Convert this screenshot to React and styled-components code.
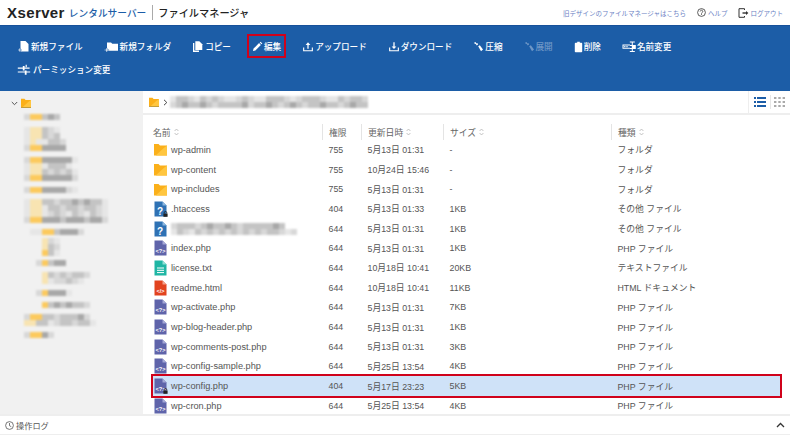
import styled, { createGlobalStyle } from "styled-components";

const GlobalStyle = createGlobalStyle`
  html, body {
    margin: 0;
    padding: 0;
    background: #fff;
    font-family: "Liberation Sans", "Noto Sans CJK JP", sans-serif;
    color: #555;
  }
`;

const Page = styled.div`
  width: 790px;
  height: 437px;
  display: flex;
  flex-direction: column;
  overflow: hidden;
`;

const Header = styled.header`
  height: 25px;
  display: flex;
  align-items: center;
  padding: 0 7px;
  flex: none;
`;

const Logo = styled.span`
  font-size: 15px;
  font-weight: 700;
  color: #222;
  letter-spacing: 0.4px;
`;

const Service = styled.span`
  margin-left: 4px;
  font-size: 9.7px;
  font-weight: 500;
  color: #1c5da7;
`;

const AppName = styled.span`
  margin-left: 6px;
  padding-left: 5px;
  border-left: 1px solid #aaa;
  font-size: 10.2px;
  font-weight: 500;
  color: #222;
`;

const HeaderLinks = styled.nav`
  margin-left: auto;
  display: flex;
  align-items: center;
  font-size: 6.5px;
`;

const HeaderLink = styled.a`
  display: flex;
  align-items: center;
  gap: 2px;
  margin-left: ${(p) => p.$gap}px;
  color: #6b7fc4;
`;

const Toolbar = styled.div`
  height: 66px;
  flex: none;
  box-sizing: border-box;
  background: #1c5da7;
  border-top: 1px solid #17519a;
  padding: 13px 60px 0 17px;
  display: flex;
  flex-wrap: wrap;
  align-content: flex-start;
  column-gap: 21px;
  row-gap: 9px;
`;

const ToolButton = styled.div`
  height: 14px;
  display: flex;
  align-items: center;
  gap: 1px;
  font-size: 8.6px;
  font-weight: 500;
  white-space: nowrap;
  color: ${(p) => (p.$disabled ? "#6f97c6" : "#fff")};
  outline: ${(p) => (p.$active ? "2.5px solid #d0021b" : "none")};
  outline-offset: 3px;
`;

const Body = styled.div`
  flex: 1;
  min-height: 0;
  display: flex;
`;

const Sidebar = styled.aside`
  width: 143px;
  flex: none;
  background: #f1f1f1;
  padding-top: 7px;
  box-sizing: border-box;
`;

const TreeRoot = styled.div`
  display: flex;
  align-items: center;
  gap: 3px;
  padding-left: 11px;
  height: 10px;
  margin-bottom: 6px;
`;

const Mosaic = styled.div`
  display: flex;
  flex-direction: column;
  filter: blur(0.9px);
  padding-left: ${(p) => p.$left || 0}px;
`;

const MosaicRow = styled.div`
  display: flex;
  height: 6px;
  margin-top: ${(p) => p.$top || 0}px;
`;

const tones = {
  ".": "transparent",
  a: "#e6e6e6",
  l: "#d8d8d8",
  m: "#c4c4c4",
  d: "#a8a8a8",
  y: "#fcca5e",
  p: "#f8e4b2",
};

const MosaicCell = styled.i`
  width: 6px;
  height: 6px;
  flex: none;
  background: ${(p) => tones[p.$tone]};
`;

const Main = styled.main`
  flex: 1;
  min-width: 0;
  display: flex;
  flex-direction: column;
`;

const PathBar = styled.div`
  height: 24px;
  flex: none;
  box-sizing: border-box;
  border-bottom: 2px solid #eee;
  display: flex;
  align-items: center;
  padding-left: 6px;
`;

const PathArrow = styled.span`
  margin: 0 2px 0 4px;
  display: flex;
`;

const ViewSwitch = styled.div`
  margin-left: auto;
  width: 42px;
  height: 100%;
  box-sizing: border-box;
  border-left: 1px solid #eee;
  display: flex;
  align-items: center;
  justify-content: space-between;
  padding: 0 5px;
`;

const ViewDivider = styled.span`
  width: 1px;
  height: 14px;
  background: #e6e6e6;
`;

const Listing = styled.div`
  flex: 1;
  min-height: 0;
  overflow: hidden;
  padding: 9px 10px 0;
`;

const Grid = styled.div`
  display: grid;
  grid-template-columns: 169px 39px 82px 168px 1fr;
  align-items: center;
`;

const HeadRow = styled(Grid)`
  height: 16px;
  font-size: 8.8px;
  color: #666;
`;

const HeadCell = styled.div`
  display: flex;
  align-items: center;
  gap: 3px;
  height: 100%;
  padding-left: ${(p) => (p.$first ? 0 : 6)}px;
  border-left: ${(p) => (p.$first ? "none" : "1px solid #e4e4e4")};
  box-sizing: border-box;
`;

const FileRow = styled(Grid)`
  height: 19.7px;
  font-size: 8.8px;
  color: #555;
  background: ${(p) => (p.$selected ? "#cfe2f8" : "transparent")};
  outline: ${(p) => (p.$selected ? "2.5px solid #d0021b" : "none")};
  position: relative;
`;

const Cell = styled.div`
  padding-left: 6.5px;
  white-space: nowrap;
`;

const NameCell = styled.div`
  display: flex;
  align-items: center;
  gap: 4px;
  font-size: 9.2px;
  padding-left: 1px;
  white-space: nowrap;
`;

const IconBox = styled.span`
  position: relative;
  display: flex;
  width: 13px;
  height: 16px;
  align-items: center;
  flex: none;
`;

const LockBadge = styled.svg`
  position: absolute;
  right: -1px;
  bottom: 0;
`;

const Footer = styled.footer`
  height: 21px;
  flex: none;
  box-sizing: border-box;
  border-top: 2px solid #eee;
  border-bottom: 1px solid #eee;
  margin-bottom: 2px;
  display: flex;
  align-items: center;
  padding: 0 5px;
  font-size: 8.2px;
  color: #555;
  gap: 2px;
`;

const FooterToggle = styled.span`
  margin-left: auto;
  display: flex;
`;

const W = ({ children, w = 13, vb = "0 0 13 13" }) => (
  <svg width={w} height="13" viewBox={vb} fill="#fff">
    {children}
  </svg>
);

const icons = {
  newFile: (
    <W>
      <path d="M3.5 1h5l3 3v7.5h-8z" />
      <path d="M1 9.5h1.2V8.3h1v1.2h1.2v1H3.2v1.2h-1v-1.2H1z" stroke="#1c5da7" strokeWidth=".4" />
    </W>
  ),
  newFolder: (
    <W w={15} vb="0 0 15 13">
      <path d="M3 2.5h4l1.3 1.3H14v7H3z" />
      <path d="M.6 9.5h1.5V8h1.1v1.5h1.5v1.1H3.2v1.5H2.1v-1.5H.6z" stroke="#1c5da7" strokeWidth=".4" />
    </W>
  ),
  copy: (
    <W w={12} vb="0 0 12 13">
      <path d="M1 3h1.3v7.5H7V12H1z" />
      <path d="M3.3 1.2h4l3 3V10h-7z" />
    </W>
  ),
  edit: (
    <W w={11} vb="0 0 12 13">
      <path d="M1 11.5l.7-2.7 6-6 2 2-6 6zM8.4 2.1l.9-.9 2 2-.9.9z" />
    </W>
  ),
  upload: (
    <W w={12}>
      <path d="M1.2 7.5h1.2v3h8.2v-3h1.2v4.2H1.2z" />
      <path d="M6.5 2l2.6 2.8H7.2V9H5.8V4.8H3.9z" />
    </W>
  ),
  download: (
    <W w={12}>
      <path d="M1.2 7.5h1.2v3h8.2v-3h1.2v4.2H1.2z" />
      <path d="M6.5 9.2L3.9 6.4h1.9V2h1.4v4.4h1.9z" />
    </W>
  ),
  compress: (
    <W w={11} vb="0 0 11 13">
      <path d="M.8 3l1.6-.9 1.2 1.5 1-.5.3 2-2 .2.5-.9z" />
      <path d="M5.2 6.2l1.6-1 3.2 4.4-2 1.6z" />
    </W>
  ),
  expand: (
    <W w={11} vb="0 0 11 13">
      <g fill="#6f97c6">
        <path d="M.8 3l1.6-.9 1.2 1.5 1-.5.3 2-2 .2.5-.9z" />
        <path d="M5.2 6.2l1.6-1 3.2 4.4-2 1.6z" />
      </g>
    </W>
  ),
  trash: (
    <W w={9} vb="0 0 9 13">
      <path d="M3.2 1.8h2.6v.9h1.6c.5 0 .8.3.8.8v8c0 .5-.3.8-.8.8H1.6c-.5 0-.8-.3-.8-.8v-8c0-.5.3-.8.8-.8h1.6z" />
    </W>
  ),
  rename: (
    <W w={14} vb="0 0 14 13">
      <path d="M.5 4.5h7.5v1H1.5v2.2H8v1H.5z" />
      <path d="M7.8 1.5h5v1h-2v2.4h3v4h-3v2.2h2v1h-5v-1h2V8.9H8V7.9h1.8v-2H8v-1h1.8V2.5h-2z" />
      <path d="M2.2 6h1.2v1.2H2.2zM4.4 6h1.2v1.2H4.4z" />
    </W>
  ),
  perm: (
    <W w={15} vb="0 0 15 13">
      <path d="M.8 4.6h5V3h1.8v1.6h5v1.2h-5v1.6H5.8V5.8h-5z" />
      <path d="M.8 8.4h7V7.4h1.8v1h3.6v1.2H9.6v2.2H7.8V9.6h-7z" />
      <path d="M8.6 1.8h1.2v2.4H8.6z" />
    </W>
  ),
};

const tools = [
  ["newFile", "新規ファイル"],
  ["newFolder", "新規フォルダ"],
  ["copy", "コピー"],
  ["edit", "編集", { $active: true }],
  ["upload", "アップロード"],
  ["download", "ダウンロード"],
  ["compress", "圧縮"],
  ["expand", "展開", { $disabled: true }],
  ["trash", "削除"],
  ["rename", "名前変更"],
  ["perm", "パーミッション変更"],
];

function Folder({ size = 12, line }) {
  return (
    <svg width={size} height={size} viewBox="0 0 12 12">
      <path d="M0 1h4.2L5.5 2.4H12V11.5H0z" fill="#fbb01a" />
      <path d="M12 2.4v9.1H1.5L8 5.5z" fill="#ffc640" />
      {line && <path d="M0 11.6h12" stroke="#8a6a10" strokeWidth=".7" />}
    </svg>
  );
}

const docColors = {
  php: ["#5f64aa", "#a5a8d6"],
  help: ["#2f72b4", "#8cb6de"],
  text: ["#1fb6a4", "#8fe0d5"],
  html: ["#e2431f", "#f2a18c"],
};

function Doc({ kind, locked }) {
  const [fill, fold] = docColors[kind];
  return (
    <IconBox>
      <svg width="13" height="16" viewBox="0 0 13 16">
        <path d="M.5.5h8L12.5 4.5v11H.5z" fill={fill} />
        <path d="M8.5.5l4 4h-4z" fill={fold} />
        {kind === "php" && (
          <text x="6.5" y="12.8" fontSize="5.6" fontWeight="700" textAnchor="middle" fill="#fff">
            {"<?>"}
          </text>
        )}
        {kind === "help" && (
          <text x="6" y="13.6" fontSize="10" fontWeight="700" textAnchor="middle" fill="#fff">
            ?
          </text>
        )}
        {kind === "html" && (
          <text x="6.5" y="12.5" fontSize="5.6" fontWeight="700" textAnchor="middle" fill="#fff">
            {"</>"}
          </text>
        )}
        {kind === "text" && <path d="M3 8h7M3 10.3h7M3 12.6h7" stroke="#fff" strokeWidth="1" />}
      </svg>
      {locked && (
        <LockBadge width="5" height="6" viewBox="0 0 5 6">
          <path d="M1.2 2.6V1.8a1.3 1.3 0 012.6 0v.8" fill="none" stroke="#222" strokeWidth=".8" />
          <path d="M.4 2.6h4.2v3.2H.4z" fill="#222" />
        </LockBadge>
      )}
    </IconBox>
  );
}

function SortMark() {
  return (
    <svg width="5" height="8" viewBox="0 0 5 8" fill="none" stroke="#aaa" strokeWidth=".7">
      <path d="M.6 3L2.5 1l1.9 2M.6 5l1.9 2 1.9-2" />
    </svg>
  );
}

const files = [
  ["folder", "wp-admin", "755", "5月13日 01:31", "-", "フォルダ"],
  ["folder", "wp-content", "755", "10月24日 15:46", "-", "フォルダ"],
  ["folder", "wp-includes", "755", "5月13日 01:31", "-", "フォルダ"],
  ["help", ".htaccess", "404", "5月13日 01:33", "1KB", "その他 ファイル", true],
  ["help", null, "644", "5月13日 01:31", "1KB", "その他 ファイル"],
  ["php", "index.php", "644", "5月13日 01:31", "1KB", "PHP ファイル"],
  ["text", "license.txt", "644", "10月18日 10:41", "20KB", "テキストファイル"],
  ["html", "readme.html", "644", "10月18日 10:41", "11KB", "HTML ドキュメント"],
  ["php", "wp-activate.php", "644", "5月13日 01:31", "7KB", "PHP ファイル"],
  ["php", "wp-blog-header.php", "644", "5月13日 01:31", "1KB", "PHP ファイル"],
  ["php", "wp-comments-post.php", "644", "5月13日 01:31", "3KB", "PHP ファイル"],
  ["php", "wp-config-sample.php", "644", "5月25日 13:54", "4KB", "PHP ファイル"],
  ["php", "wp-config.php", "404", "5月17日 23:23", "5KB", "PHP ファイル", true, true],
  ["php", "wp-cron.php", "644", "5月25日 13:54", "4KB", "PHP ファイル"],
];

// blurred-out folder tree, one letter per 6px block
const tree = [
  ["lyymdm", 0],
  ["appmla", 7],
  ["appmlm", 0],
  ["apaamml", 0],
  ["lyydddd", 0],
  ["lyyddddda", 6],
  ["appammma", 0],
  ["appmlmlma", 0],
  ["lyydddddl", 0],
  ["lyyddddla", 6],
  ["appmmlmmdmdmma", 6],
  ["appammlmmlmmla", 0],
  ["appalmlamlamla", 0],
  ["lyydddmdddmddl", 0],
  [".aayymdddl", 6],
  ["...pla", 3],
  ["...pml", 0],
  ["...yma", 0],
  ["..lymdd", 4],
  ["...pmlmlmml", 6],
  ["...pallmla", 0],
  ["..lyddda", 6],
  ["...ymdmdmml", 6],
  ["lyymmlmmmdl", 6],
  ["ppmmalmmlmma", 0],
  ["lyydl", 6],
];

const pathMosaic = [
  "ammlamlmlaalmlaammmlalmmmlaamlmml",
  "lmdmmdmlmmmmdlmmdmlmdmlmmdmmlmdmm",
];

const fileMosaic = [
  "lmmmlmdmmdmlmmmmmdm",
  "amlamlmlmlmlmlmlmmlal",
];

function Blur({ rows, left }) {
  return (
    <Mosaic $left={left}>
      {rows.map(([cells, top], i) => (
        <MosaicRow key={i} $top={top}>
          {cells.split("").map((tone, j) => (
            <MosaicCell key={j} $tone={tone} />
          ))}
        </MosaicRow>
      ))}
    </Mosaic>
  );
}

export default function App() {
  return (
    <Page>
      <GlobalStyle />
      <Header>
        <Logo>Xserver</Logo>
        <Service>レンタルサーバー</Service>
        <AppName>ファイルマネージャ</AppName>
        <HeaderLinks>
          <HeaderLink $gap={0}>旧デザインのファイルマネージャはこちら</HeaderLink>
          <HeaderLink $gap={11}>
            <svg width="9" height="9" viewBox="0 0 9 9" fill="none" stroke="#333" strokeWidth=".8">
              <circle cx="4.5" cy="4.5" r="3.9" />
              <path d="M3.2 3.5a1.3 1.3 0 112 1.1c-.5.3-.7.5-.7 1M4.5 6.2v.8" />
            </svg>
            ヘルプ
          </HeaderLink>
          <HeaderLink $gap={10}>
            <svg width="11" height="10" viewBox="0 0 11 10" fill="none" stroke="#333" strokeWidth="1">
              <path d="M6.5 2V.7H1v8.6h5.5V8" />
              <path d="M4.5 5H9" strokeWidth="1.4" />
              <path d="M8 3l2.4 2L8 7z" fill="#333" stroke="none" />
            </svg>
            ログアウト
          </HeaderLink>
        </HeaderLinks>
      </Header>

      <Toolbar>
        {tools.map(([icon, label, props]) => (
          <ToolButton key={label} {...props}>
            {icons[icon]}
            {label}
          </ToolButton>
        ))}
      </Toolbar>

      <Body>
        <Sidebar>
          <TreeRoot>
            <svg width="7" height="5" viewBox="0 0 7 5" fill="none" stroke="#555" strokeWidth="1">
              <path d="M.8 1l2.7 2.7L6.2 1" />
            </svg>
            <Folder size={10} line />
          </TreeRoot>
          <Blur rows={tree} left={24} />
        </Sidebar>

        <Main>
          <PathBar>
            <Folder size={10} line />
            <PathArrow>
              <svg width="5" height="7" viewBox="0 0 5 7" fill="none" stroke="#444" strokeWidth="1">
                <path d="M1 .8l2.8 2.7L1 6.2" />
              </svg>
            </PathArrow>
            <Blur rows={pathMosaic.map((r) => [r, 0])} />
            <ViewSwitch>
              <svg width="12" height="10" viewBox="0 0 12 10" fill="#1c5da7">
                <path d="M0 0h2v2H0zM3 0h9v2H3zM0 4h2v2H0zM3 4h9v2H3zM0 8h2v2H0zM3 8h9v2H3z" />
              </svg>
              <ViewDivider />
              <svg width="11" height="10" viewBox="0 0 11 10" fill="#aaa">
                <path d="M0 0h2.4v2H0zM4.3 0h2.4v2H4.3zM8.6 0H11v2H8.6zM0 4h2.4v2H0zM4.3 4h2.4v2H4.3zM8.6 4H11v2H8.6zM0 8h2.4v2H0zM4.3 8h2.4v2H4.3zM8.6 8H11v2H8.6z" />
              </svg>
            </ViewSwitch>
          </PathBar>

          <Listing>
            <HeadRow>
              <HeadCell $first>
                名前 <SortMark />
              </HeadCell>
              <HeadCell>権限</HeadCell>
              <HeadCell>
                更新日時 <SortMark />
              </HeadCell>
              <HeadCell>
                サイズ <SortMark />
              </HeadCell>
              <HeadCell>
                種類 <SortMark />
              </HeadCell>
            </HeadRow>
            {files.map(([kind, name, perm, date, size, type, locked, selected], i) => (
              <FileRow key={i} $selected={selected}>
                <NameCell>
                  {kind === "folder" ? (
                    <IconBox>
                      <Folder size={13} />
                    </IconBox>
                  ) : (
                    <Doc kind={kind} locked={locked} />
                  )}
                  {name || <Blur rows={fileMosaic.map((r) => [r, 0])} />}
                </NameCell>
                <Cell>{perm}</Cell>
                <Cell>{date}</Cell>
                <Cell>{size}</Cell>
                <Cell>{type}</Cell>
              </FileRow>
            ))}
          </Listing>
        </Main>
      </Body>

      <Footer>
        <svg width="9" height="9" viewBox="0 0 9 9" fill="none" stroke="#555" strokeWidth=".8">
          <circle cx="4.5" cy="4.5" r="3.9" />
          <path d="M4.5 2v2.7l1.8 1" />
        </svg>
        操作ログ
        <FooterToggle>
          <svg width="9" height="6" viewBox="0 0 9 6" fill="none" stroke="#333" strokeWidth="1.3">
            <path d="M1 5l3.5-3.5L8 5" />
          </svg>
        </FooterToggle>
      </Footer>
    </Page>
  );
}
